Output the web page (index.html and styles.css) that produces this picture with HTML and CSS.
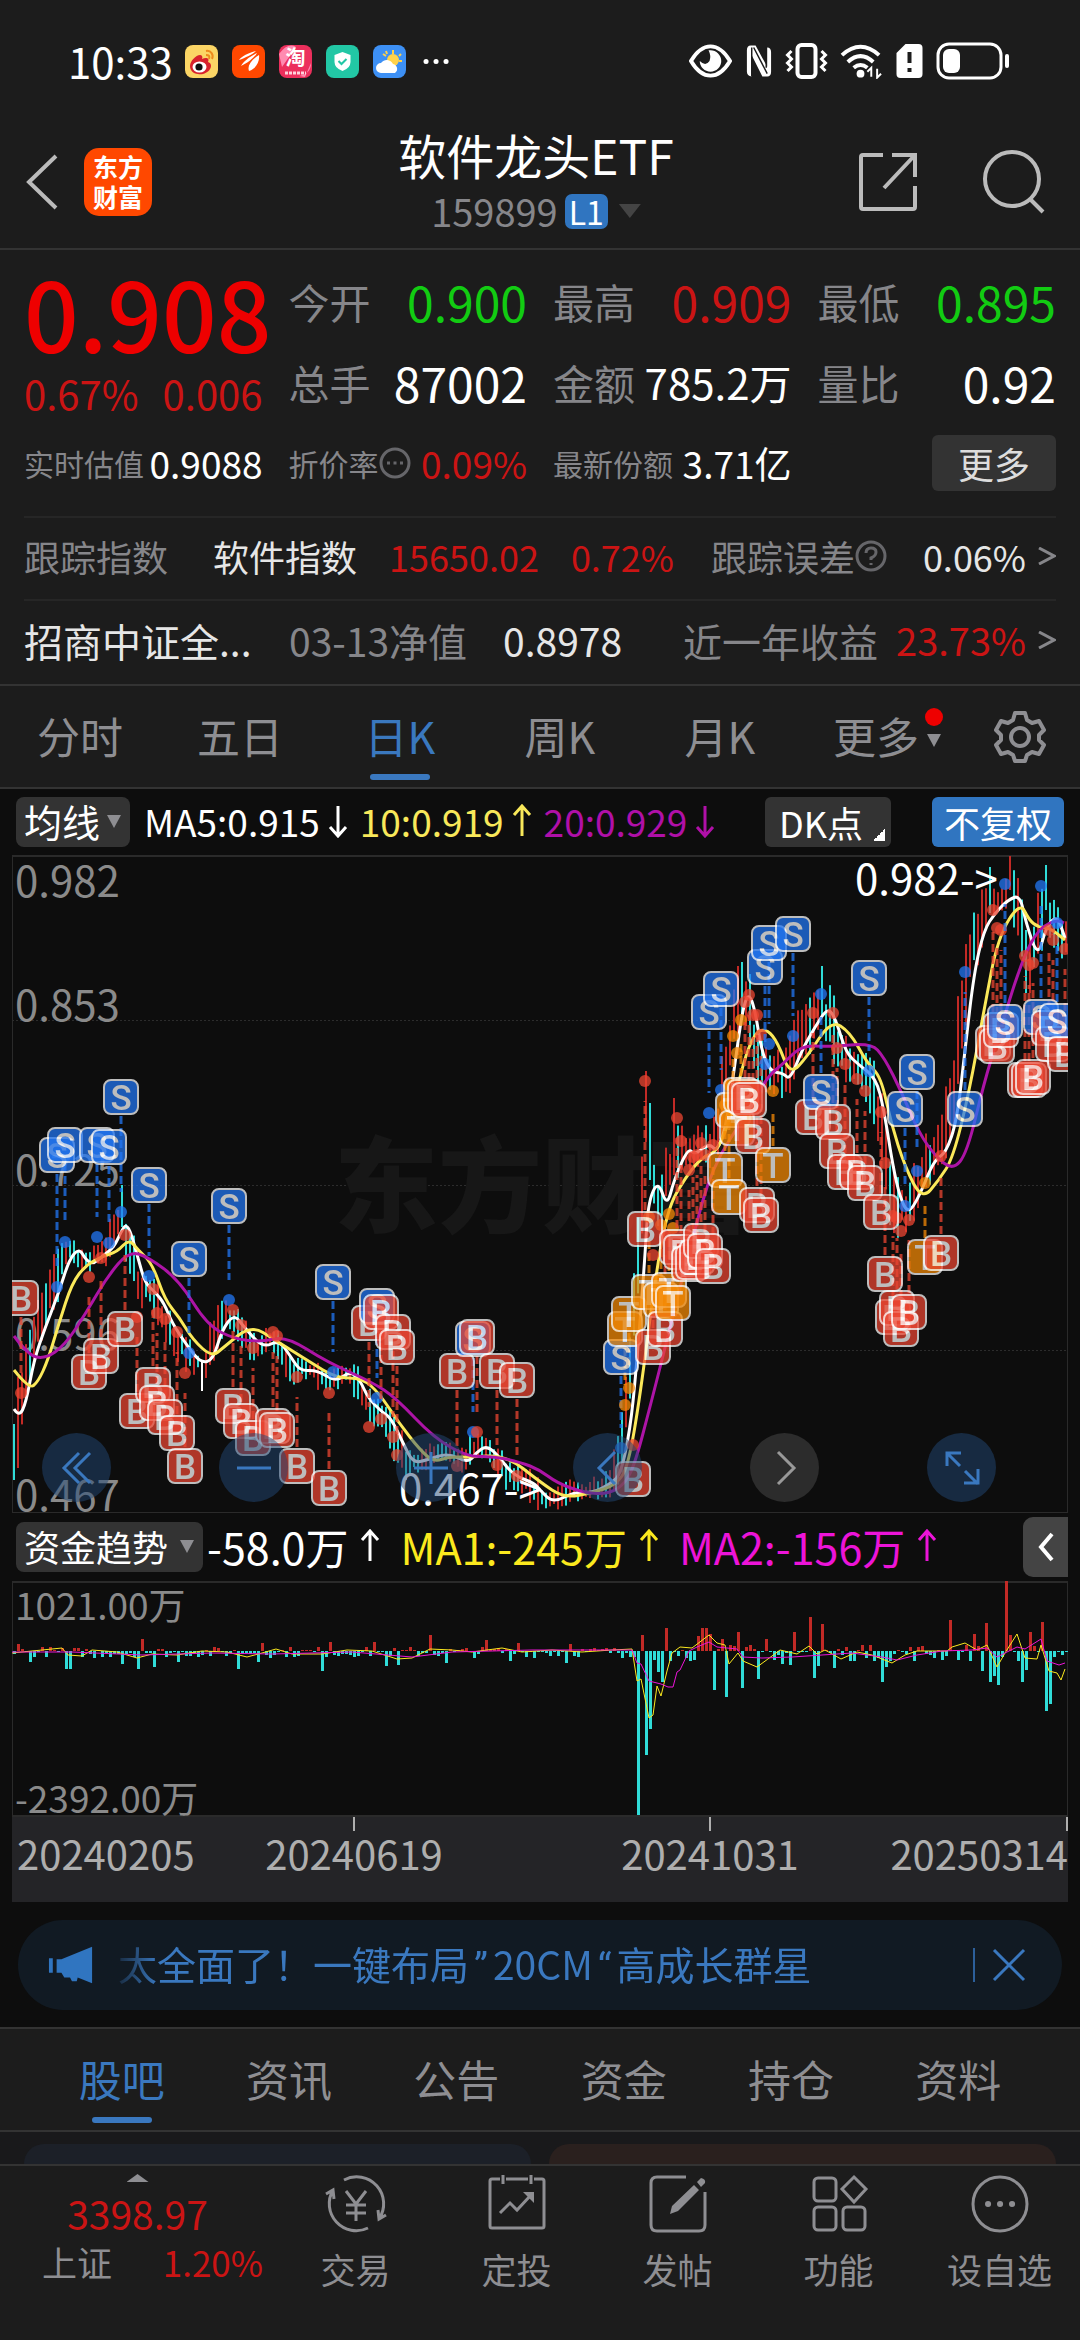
FILE: index.html
```html
<!DOCTYPE html>
<html lang="zh-CN">
<head>
    <meta charset="UTF-8">
    <meta name="viewport" content="width=device-width, initial-scale=1.0">
    <title>软件龙头ETF 159899</title>
    <link rel="stylesheet" href="styles.css">
</head>
<body>
    <div class="status-bar">
        <span class="clock">10:33</span>
        <div class="app-icons">
            <svg viewBox="0 0 33 33"><rect width="33" height="33" rx="8" fill="#fbd565"/><path d="M5 21c0-5 6-11 10-11 2 0 3 2 2 4 4-2 8-1 6 3 3 1 4 4 2 7-2 4-8 6-12 5-5 0-8-4-8-8z" fill="#d8222c"/><ellipse cx="14.500" cy="22" rx="7" ry="5.500" fill="#fff"/><circle cx="14" cy="22" r="3.600" fill="#111"/><path d="M21 6c5-1 8 4 6 8M21 10c3 0 4 1 3 4" fill="none" stroke="#ee8a1c" stroke-width="2"/></svg>
            <svg viewBox="0 0 33 33"><rect width="33" height="33" rx="8" fill="#ff4800"/><path d="M7 15c3-4 9-7 17-9-3 3-11 7-17 9zM9 21c3-5 8-9 16-13-2 4-9 10-16 13zM17 26c-2-5 2-11 10-16 1 6-3 14-10 16z" fill="#fff"/></svg>
            <svg viewBox="0 0 33 33"><rect width="33" height="33" rx="8" fill="#ec2f5c"/><path d="M0 9Q9-3 17 2L3 22zM20 31q12-2 12-13l-6 14z" fill="#ff8bb0"/><text x="16.500" y="20" class="tao">淘</text><path d="M6 28h21" stroke="#ffd2dc" stroke-width="3" stroke-dasharray="3 1"/></svg>
            <svg viewBox="0 0 33 33"><rect width="33" height="33" rx="8" fill="#22c7a5"/><path d="M16.500 7l8 3v7q0 6-8 9-8-3-8-9v-7z" fill="#fff"/><path d="M12.500 16l3 3 5-5" fill="none" stroke="#22c7a5" stroke-width="2"/></svg>
            <svg viewBox="0 0 33 33"><rect width="33" height="33" rx="8" fill="#3d90f5"/><path d="M20 5v4M10 9l3 2M28 9l-2 2M29 16h-3M13 6l1 3" stroke="#ffd24a" stroke-width="2"/><circle cx="20" cy="15" r="6" fill="#ffd24a"/><path d="M8 28a5 5 0 0 1 0-10 7 7 0 0 1 12 1 5 5 0 0 1 2 9z" fill="#fff"/></svg>
            <svg viewBox="0 0 33 33"><path d="M6 16.500h.1M16 16.500h.1M26 16.500h.1" stroke="#fff" stroke-width="5" stroke-linecap="round"/></svg>
        </div>
        <div class="system-icons">
            <svg class="eye" viewBox="0 0 44 36"><path d="M2 18Q11 3 22 3t20 15Q33 33 22 33T2 18z" fill="none" stroke="#fff" stroke-width="4"/><path d="M22 7a11 11 0 1 1-11 11q6 6 10 0 2-5-1-11z" fill="#fff"/></svg>
            <svg class="nfc" viewBox="0 0 30 36"><path d="M7 2h5l12 22V4q4 0 4 5v20q0 5-4 5h-5L8 12v22q-5-1-5-5V7q0-5 4-5z" fill="#fff"/><path d="M8 4v30M10 4l14 27M23 3v22" stroke="#1c1c1c" stroke-width="1.500"/></svg>
            <svg class="vibrate" viewBox="0 0 42 36"><rect x="12" y="2" width="18" height="32" rx="4" fill="none" stroke="#fff" stroke-width="4"/><path d="M6 8L2 12l4 4-4 4 4 4-4 4M36 8l4 4-4 4 4 4-4 4 4 4" fill="none" stroke="#fff" stroke-width="3"/></svg>
            <svg class="wifi" viewBox="0 0 44 36"><path d="M2 12q19-17 38 0M8 19q13-12 26 0M14 25q7-6 14 0" fill="none" stroke="#fff" stroke-width="4"/><circle cx="21" cy="31" r="4" fill="#fff"/><path d="M32 34v-9l-4 4M38 26v9l4-4" fill="none" stroke="#fff" stroke-width="2"/></svg>
            <svg class="sim" viewBox="0 0 28 36"><path d="M10 1h13q4 0 4 4v26q0 4-4 4H5q-4 0-4-4V10z" fill="#fff"/><path d="M14 9v11M14 25v4" stroke="#1c1c1c" stroke-width="4"/></svg>
            <svg class="battery" viewBox="0 0 74 38"><rect x="2" y="2" width="63" height="34" rx="11" fill="none" stroke="#fff" stroke-width="3"/><rect x="7" y="7" width="17" height="24" rx="6" fill="#fff"/><path d="M71 14v10" stroke="#fff" stroke-width="4" stroke-linecap="round"/></svg>
        </div>
    </div>

    <header class="header">
        <div class="header-left">
            <button class="icon-button" aria-label="返回"><svg class="back" viewBox="0 0 34 56"><path d="M31 2L4 28l27 26"/></svg></button>
            <div class="logo">东方<br>财富</div>
        </div>
        <div class="header-title">
            <h1>软件龙头ETF</h1>
            <div class="code">159899<span class="level">L1</span><i class="caret"></i></div>
        </div>
        <div class="header-right">
            <button class="icon-button" aria-label="分享"><svg class="share" viewBox="0 0 60 60"><path d="M25 3H5q-2 0-2 2v50q0 2 2 2h50q2 0 2-2V34M34 3h23v22M57 3L26 36"/></svg></button>
            <button class="icon-button" aria-label="搜索"><svg class="search" viewBox="0 0 66 66"><circle cx="30" cy="30" r="27"/><path d="M48 50l13 13"/></svg></button>
        </div>
    </header>

    <main>
        <section class="quote">
            <div class="price">
                <strong>0.908</strong>
                <div class="change"><span>0.67%</span><span>0.006</span></div>
            </div>
            <div class="cell"><span>今开</span><b class="green">0.900</b></div>
            <div class="cell"><span>最高</span><b class="red">0.909</b></div>
            <div class="cell"><span>最低</span><b class="green">0.895</b></div>
            <div class="cell"><span>总手</span><b>87002</b></div>
            <div class="cell"><span>金额</span><b class="amount">785.2万</b></div>
            <div class="cell"><span>量比</span><b>0.92</b></div>
            <div class="cell small"><span>实时估值</span><b>0.9088</b></div>
            <div class="cell small"><span>折价率<svg class="info" viewBox="0 0 32 32"><circle cx="16" cy="16" r="14"/><path d="M8 16h3M14.500 16h3M21 16h3"/></svg></span><b class="red">0.09%</b></div>
            <div class="cell small"><span>最新份额</span><b>3.71亿</b></div>
            <div class="cell last"><button class="more">更多</button></div>
        </section>

        <a class="info-row" href="#index">
            <span class="muted">跟踪指数</span>
            <span>软件指数</span>
            <span class="red pair"><span>15650.02</span><span>0.72%</span></span>
            <span class="muted">跟踪误差<svg class="info" viewBox="0 0 32 32"><circle cx="16" cy="16" r="14"/><path d="M11 13q0-5 5-5t5 4-5 6v2M16 23v2"/></svg></span>
            <span class="end">0.06%<svg class="arrow" viewBox="0 0 18 18"><path d="M1 1l15 8-15 8"/></svg></span>
        </a>
        <a class="info-row nav-row" href="#fund">
            <span>招商中证全...</span>
            <span class="muted">03-13净值</span>
            <span class="value">0.8978</span>
            <span class="muted">近一年收益</span>
            <span class="end red">23.73%<svg class="arrow" viewBox="0 0 18 18"><path d="M1 1l15 8-15 8"/></svg></span>
        </a>

        <nav class="period-tabs">
            <a href="#minute">分时</a>
            <a href="#five">五日</a>
            <a href="#day" class="active">日K</a>
            <a href="#week">周K</a>
            <a href="#month">月K</a>
            <a href="#more" class="tab-more">更多<span class="marks"><i class="dot"></i><i class="caret"></i></span></a>
            <button class="icon-button" aria-label="设置"><svg class="gear" viewBox="0 0 52 52"><path d="M21 2h10l2 7 5 3 7-2 5 9-5 5v5l5 5-5 9-7-2-5 3-2 6H21l-2-6-5-3-7 2-5-9 5-5v-5l-5-5 5-9 7 2 5-3z"/><circle cx="26" cy="26" r="9"/></svg></button>
        </nav>

        <section class="charts">
            <div class="toolbar">
                <span class="dropdown ma-drop"><select aria-label="均线"><option>均线</option></select></span>
                <span class="legend"><span>MA5:0.915<svg class="trend" viewBox="0 0 20 34"><path d="M10 2v30M2 23l8 9 8-9"/></svg></span><span class="yellow">10:0.919<svg class="trend" viewBox="0 0 20 34"><path d="M10 32V2M2 11l8-9 8 9"/></svg></span><span class="purple">20:0.929<svg class="trend" viewBox="0 0 20 34"><path d="M10 2v30M2 23l8 9 8-9"/></svg></span></span>
                <button class="dk">DK点</button>
                <button class="adjust">不复权</button>
            </div>

            <div class="kline">
                <svg id="kline" viewBox="0 0 1056 658"></svg>
                <div class="controls">
                    <button aria-label="最早"><svg viewBox="0 0 40 40"><path d="M22 5L7 20l15 15M33 5L18 20l15 15"/></svg></button>
                    <button aria-label="缩小"><svg viewBox="0 0 40 40"><path d="M3 20h34"/></svg></button>
                    <button aria-label="放大"><svg viewBox="0 0 40 40"><path d="M3 20h34M20 4v32"/></svg></button>
                    <button aria-label="向左"><svg viewBox="0 0 40 40"><path d="M27 4L11 20l16 16"/></svg></button>
                    <button aria-label="向右" class="off"><svg viewBox="0 0 40 40"><path d="M13 4l16 16-16 16"/></svg></button>
                    <button aria-label="全屏"><svg viewBox="0 0 40 40"><path d="M18 18L5 5M5 18V5h14M23 23l13 13M36 21v14H22"/></svg></button>
                </div>
            </div>

            <div class="toolbar flow-toolbar">
                <span class="dropdown flow-drop"><select aria-label="指标"><option>资金趋势</option></select></span>
                <span class="legend flow-legend"><span>-58.0万<svg class="trend" viewBox="0 0 20 34"><path d="M10 32V2M2 11l8-9 8 9"/></svg></span><span class="bright-yellow">MA1:-245万<svg class="trend" viewBox="0 0 20 34"><path d="M10 32V2M2 11l8-9 8 9"/></svg></span><span class="pink">MA2:-156万<svg class="trend" viewBox="0 0 20 34"><path d="M10 32V2M2 11l8-9 8 9"/></svg></span></span>
                <button class="expand" aria-label="展开"><svg viewBox="0 0 18 30"><path d="M15 2L4 15l11 13"/></svg></button>
            </div>
            <svg id="flow" viewBox="0 0 1056 236"></svg>
            <div class="axis"><span>20240205</span><span class="tick">20240619</span><span class="tick">20241031</span><span class="tick">20250314</span></div>

            <div class="notice">
                <svg class="horn" viewBox="0 0 48 40"><path d="M1 13h4v15H1zM9 14h5L46 1v38l-15-6-1 4h-5l-2-4h-6l-3-5H9z"/></svg>
                <p>太全面了！一键布局<q>”</q>20CM<q>“</q>高成长群星</p>
                <button class="close" aria-label="关闭"><svg viewBox="0 0 34 34"><path d="M2 2l30 30M32 2L2 32"/></svg></button>
            </div>
        </section>

        <nav class="content-tabs">
            <a href="#bar" class="active">股吧</a>
            <a href="#news">资讯</a>
            <a href="#notice">公告</a>
            <a href="#money">资金</a>
            <a href="#hold">持仓</a>
            <a href="#data">资料</a>
        </nav>
        <div class="cards"><div class="card blue"></div><div class="card brown"></div></div>
    </main>

    <footer class="bottom-bar">
        <a class="market" href="#sh">
            <i class="caret up"></i>
            <span class="points">3398.97</span>
            <span class="market-row"><span>上证</span><span class="red">1.20%</span></span>
        </a>
        <a class="action" href="#trade"><svg viewBox="0 0 64 60"><path d="M20 6a27 27 0 0 1 35 39M44 54A27 27 0 0 1 9 16M2 20l7-4 1 9M62 41l-7 4-1-9M22 17l10 13 10-13M32 30v17M22 31h20M22 39h20"/></svg>交易</a>
        <a class="action" href="#plan"><svg viewBox="0 0 64 60"><path d="M15 5H7q-2 0-2 2v45q0 2 2 2h50q2 0 2-2V7q0-2-2-2h-8M21 5h22M18 1v9M46 1v9M15 39l10-10 7 7 14-15"/><path class="solid" d="M38 18h11v11z"/></svg>定投</a>
        <a class="action" href="#post"><svg viewBox="0 0 64 60"><path d="M40 3H11q-6 0-6 6v42q0 6 6 6h42q6 0 6-6V18"/><path class="solid" d="M24 40l2-8 22-21 5 5-21 21zM51 8l4-4q5 1 4 5l-4 4z"/></svg>发帖</a>
        <a class="action" href="#tools"><svg viewBox="0 0 64 60"><rect x="7" y="4" width="22" height="23" rx="4"/><path d="M47 3l12 12-12 13-12-13z"/><rect x="7" y="33" width="22" height="23" rx="4"/><rect x="36" y="33" width="22" height="23" rx="4"/></svg>功能</a>
        <a class="action" href="#favorite"><svg viewBox="0 0 64 60"><circle cx="32" cy="30" r="27"/><path class="dots" d="M20 30h.1M32 30h.1M44 30h.1"/></svg>设自选</a>
    </footer>

    <script src="chart.js"></script>
</body>
</html>
```
FILE: styles.css
```css
* {
    box-sizing: border-box;
}
body {
    margin: 0;
    min-height: 100vh;
    display: flex;
    flex-direction: column;
    background: #1c1c1c;
    color: #fff;
    font-family: "Noto Sans CJK SC", sans-serif;
    font-size: 36px;
    line-height: 48px;
}
a {
    color: inherit;
    text-decoration: none;
}
button, select {
    margin: 0;
    padding: 0;
    border: none;
    background: none;
    color: inherit;
    font: inherit;
}
svg {
    display: block;
    fill: none;
    flex: none;
}
.red {
    color: #cb1414;
}
.green {
    color: #12cc12;
}
.muted {
    color: #86868a;
}
.caret {
    width: 22px;
    height: 14px;
    background: #444;
    clip-path: polygon(0 0, 100% 0, 50% 100%);
}
.icon-button {
    display: flex;
    align-items: center;
    justify-content: center;
}

/* status bar */
.status-bar {
    display: flex;
    align-items: center;
    height: 84px;
    padding: 38px 70px 0 68px;
}
.clock {
    font-size: 42px;
    line-height: 40px;
}
.app-icons {
    display: flex;
    gap: 14px;
    margin-left: 12px;
}
.app-icons svg {
    width: 33px;
    height: 33px;
}
.tao {
    fill: #fff;
    font-size: 20px;
    font-weight: 700;
    text-anchor: middle;
}
.system-icons {
    display: flex;
    align-items: center;
    gap: 12px;
    margin-left: auto;
}
.eye, .wifi, .vibrate {
    width: 43px;
    height: 36px;
}
.nfc, .sim {
    width: 29px;
    height: 36px;
}
.battery {
    width: 74px;
    height: 38px;
}

/* header */
.header {
    display: grid;
    grid-template-columns: 1fr 2fr 1fr;
    align-items: center;
    height: 166px;
    padding: 32px 32px 0 24px;
    border-bottom: 2px solid #333;
}
.header-left, .header-right {
    display: flex;
    align-items: center;
}
.header-left {
    gap: 24px;
}
.header-right {
    justify-content: flex-end;
    gap: 64px;
}
.header svg {
    stroke: #bbb;
    stroke-width: 4;
}
.back {
    width: 36px;
    height: 56px;
}
.share {
    width: 60px;
    height: 60px;
}
.search {
    width: 66px;
    height: 66px;
}
.logo {
    width: 68px;
    height: 68px;
    padding-top: 3px;
    border-radius: 15px;
    background: #ff4800;
    font-size: 25px;
    font-weight: 700;
    line-height: 30px;
    text-align: center;
}
.header-title {
    display: flex;
    flex-direction: column;
    align-items: center;
}
h1 {
    margin: 0;
    font-size: 48px;
    font-weight: 400;
    line-height: 58px;
}
.code {
    display: flex;
    align-items: center;
    height: 56px;
    color: #86868a;
    font-size: 38px;
}
.level {
    margin: 0 11px 0 7px;
    padding: 0 4px;
    border-radius: 7px;
    background: #3075c0;
    color: #fff;
    font-size: 32px;
    line-height: 35px;
}

/* quote numbers */
.quote {
    display: grid;
    grid-template-columns: repeat(4, minmax(0, 1fr));
    grid-auto-rows: 81px;
    column-gap: 26px;
    margin: 0 24px;
    padding: 10px 0 13px;
    border-bottom: 2px solid #262626;
}
.price {
    grid-row: span 2;
}
.price strong {
    display: block;
    color: #ee0000;
    font-size: 96px;
    font-weight: 500;
    line-height: 104px;
}
.change {
    display: flex;
    justify-content: space-between;
    color: #cb1414;
    font-size: 40px;
    line-height: 58px;
}
.cell {
    display: flex;
    align-items: center;
    justify-content: space-between;
    white-space: nowrap;
    color: #86868a;
    font-size: 41px;
}
.cell b {
    font-size: 48px;
    font-weight: 400;
}
.cell b:not([class]), .cell .amount {
    color: #fff;
}
.cell .amount {
    font-size: 42px;
}
.cell span {
    display: flex;
    align-items: center;
}
.cell.small {
    font-size: 30px;
}
.cell.small b {
    font-size: 37px;
}
.last {
    justify-content: flex-end;
}
.more {
    width: 124px;
    height: 56px;
    border-radius: 6px;
    background: #333;
    color: #ddd;
    font-size: 36px;
    line-height: 52px;
}
.info {
    width: 32px;
    height: 32px;
    stroke: #66666a;
    stroke-width: 3;
}
.info-row {
    display: grid;
    grid-template-columns: 189px 176px 1fr 185px 160px;
    align-items: center;
    height: 83px;
    margin: 0 24px;
    padding-bottom: 5px;
    border-bottom: 2px solid #262626;
    color: #e6e6e6;
    white-space: nowrap;
}
.info-row span {
    display: flex;
    align-items: center;
}
.info-row .red {
    color: #cb1414;
}
.info-row .pair {
    gap: 32px;
}
.info-row .end {
    justify-content: flex-end;
    gap: 12px;
}
.nav-row {
    grid-template-columns: 265px 214px 1fr 200px 173px;
    border: none;
    font-size: 39px;
}
.nav-row .end {
    font-size: 38px;
}
.arrow {
    width: 18px;
    height: 18px;
    stroke: #86868a;
    stroke-width: 3;
}

/* period tabs */
.period-tabs {
    display: grid;
    grid-template-columns: repeat(6, 4fr) 3fr;
    height: 105px;
    border-top: 2px solid #333;
    border-bottom: 2px solid #333;
}
.period-tabs a, .content-tabs a {
    display: flex;
    align-items: center;
    justify-content: center;
    position: relative;
    padding-bottom: 3px;
    color: #8e8e92;
    font-size: 43px;
}
.period-tabs .active, .content-tabs .active {
    color: #3a78bf;
}
.active::after {
    content: "";
    position: absolute;
    bottom: 7px;
    width: 60px;
    height: 6px;
    border-radius: 3px;
    background: #3a78bf;
}
.period-tabs .tab-more {
    padding-left: 16px;
}
.marks {
    display: flex;
    flex-direction: column;
    align-items: center;
    gap: 8px;
    height: 54px;
    margin-left: 6px;
}
.dot {
    width: 18px;
    height: 18px;
    border-radius: 50%;
    background: #ee0000;
}
.marks .caret {
    width: 14px;
    height: 13px;
    background: #8e8e92;
}
.gear {
    width: 52px;
    height: 52px;
    stroke: #8e8e92;
    stroke-width: 4;
    stroke-linejoin: round;
}

/* charts */
.charts {
    padding: 0 12px 17px;
    background: #0d0d0d;
}
.toolbar {
    display: flex;
    align-items: center;
    height: 66px;
    padding: 0 4px;
    white-space: nowrap;
}
.dropdown {
    position: relative;
    margin-right: 14px;
    border-radius: 8px;
    background: #333;
}
.dropdown select {
    display: block;
    width: 100%;
    height: 50px;
    padding: 0 0 4px 8px;
    appearance: none;
}
.ma-drop select {
    font-size: 38px;
}
.dropdown::after {
    content: "";
    position: absolute;
    right: 9px;
    top: 18px;
    width: 14px;
    height: 13px;
    background: #8e8e92;
    clip-path: polygon(0 0, 100% 0, 50% 100%);
    pointer-events: none;
}
.ma-drop {
    width: 114px;
}
.flow-drop {
    width: 187px;
    margin-right: 4px;
}
.legend {
    display: flex;
    flex: 1;
    gap: 12px;
    padding-bottom: 3px;
    font-size: 37px;
}
.legend > span {
    display: flex;
    align-items: center;
    gap: 8px;
}
.trend {
    width: 20px;
    height: 34px;
    stroke: currentColor;
    stroke-width: 3;
}
.yellow {
    color: #f8e85a;
}
.purple {
    color: #b010a8;
}
.bright-yellow {
    color: #fbe91e;
}
.pink {
    color: #ec14d8;
}
.dk, .adjust {
    height: 50px;
    border-radius: 6px;
    line-height: 46px;
}
.dk {
    width: 126px;
    margin-right: 41px;
    padding-right: 14px;
    background: linear-gradient(135deg, transparent 50%, #fff 50%) right 6px bottom 6px / 12px 12px no-repeat #333;
}
.adjust {
    width: 132px;
    background: #3075c0;
}
.flow-toolbar {
    height: 68px;
    padding-right: 0;
}
.flow-legend {
    gap: 20px;
    font-size: 43px;
}
.flow-legend > span {
    gap: 12px;
}
.expand {
    display: flex;
    align-items: center;
    justify-content: center;
    width: 45px;
    height: 60px;
    border-radius: 10px 0 0 10px;
    background: #444;
}
.expand svg {
    width: 18px;
    height: 30px;
    stroke: #fff;
    stroke-width: 4;
}
.kline {
    position: relative;
}
#kline, #flow {
    width: 100%;
    height: auto;
}
.controls {
    position: absolute;
    left: 30px;
    right: 72px;
    bottom: 11px;
    display: flex;
    justify-content: space-between;
}
.controls button {
    display: flex;
    align-items: center;
    justify-content: center;
    width: 69px;
    height: 69px;
    border-radius: 50%;
    background: rgba(34, 72, 118, 0.5);
}
.controls .off {
    background: #2c2c2c;
}
.controls svg {
    width: 40px;
    height: 40px;
    stroke: #3a78bf;
    stroke-width: 3;
}
.controls .off svg {
    stroke: #999;
}
.frame {
    stroke: #2a2a2a;
    stroke-width: 2;
}
.grid-line {
    stroke: #2c2c2c;
    stroke-dasharray: 2 2;
}
.watermark {
    fill: #171717;
    font-size: 104px;
    font-weight: 900;
}
.scale {
    fill: #8a8a8a;
    font-size: 42px;
}
.flow-scale {
    fill: #8a8a8a;
    font-size: 37px;
}
.extreme {
    fill: #fff;
    font-size: 42px;
}
.ma {
    stroke-width: 3;
    stroke-linejoin: round;
}
.flow-ma {
    stroke-width: 1;
}
.stem {
    stroke-width: 3;
    stroke-dasharray: 8 4;
    opacity: 0.75;
}
.point {
    opacity: 0.75;
}
.badge {
    opacity: 0.73;
}
.badge rect {
    stroke: #fff;
    stroke-width: 2;
}
.badge text {
    fill: #fff;
    font-family: Roboto, sans-serif;
    font-size: 35px;
    font-weight: 500;
    text-anchor: middle;
}
.axis {
    display: grid;
    grid-template-columns: minmax(0, 164fr) minmax(0, 356fr) minmax(0, 356fr) minmax(0, 180fr);
    height: 85px;
    background: #242427;
    color: #aeaeae;
    font-size: 40px;
    line-height: 44px;
}
.axis span {
    display: flex;
    flex-direction: column;
    align-items: center;
    padding-top: 14px;
}
.axis .tick {
    padding-top: 0;
}
.axis .tick::before {
    content: "";
    width: 2px;
    height: 14px;
    background: #aeaeae;
}
.axis span:first-child {
    align-items: flex-start;
    padding-left: 5px;
}
.axis span:last-child {
    align-items: flex-end;
}

/* notice strip */
.notice {
    display: flex;
    align-items: center;
    height: 90px;
    margin: 18px 6px 0;
    padding: 0 36px 0 30px;
    border-radius: 45px;
    background: #111a23;
    color: #3a78bf;
    font-size: 39px;
}
.horn {
    width: 46px;
    height: 40px;
    fill: #3075c0;
}
.notice p {
    flex: 1;
    margin: 0 0 0 14px;
    padding-left: 10px;
    white-space: nowrap;
    mask-image: linear-gradient(90deg, transparent, #000 50px);
}
.notice q {
    margin: 0 5px;
    font-family: Roboto, sans-serif;
    quotes: none;
}
.close {
    padding-left: 17px;
    border-left: 2px solid #2c5f9a;
}
.close svg {
    width: 34px;
    height: 34px;
    stroke: #3a78bf;
    stroke-width: 3;
}

/* content tabs */
.content-tabs {
    display: grid;
    grid-template-columns: repeat(6, 1fr);
    height: 105px;
    padding: 0 38px;
    border-top: 2px solid #333;
    border-bottom: 2px solid #333;
}
.cards {
    display: grid;
    grid-template-columns: 1fr 1fr;
    gap: 18px;
    height: 32px;
    padding: 12px 24px 0;
    background: #19191b;
}
.card {
    border-radius: 26px 26px 0 0;
}
.blue {
    background: #1c2028;
}
.brown {
    background: #2a201e;
}

/* bottom bar */
.bottom-bar {
    display: grid;
    grid-template-columns: 275fr repeat(5, 161fr);
    flex: 1;
    border-top: 2px solid #333;
    color: #8e8e92;
    font-size: 35px;
}
.market {
    display: flex;
    flex-direction: column;
    align-items: center;
    padding-top: 8px;
}
.up {
    height: 8px;
    background: #8e8e92;
    clip-path: polygon(0 100%, 100% 100%, 50% 0);
}
.points {
    margin-top: 6px;
    color: #cb1414;
    font-size: 39px;
    line-height: 50px;
}
.market-row {
    display: flex;
    justify-content: space-between;
    width: 100%;
    padding: 0 12px 0 42px;
}
.action {
    display: flex;
    flex-direction: column;
    align-items: center;
    gap: 11px;
    padding-top: 8px;
}
.action svg {
    width: 64px;
    height: 60px;
    stroke: #8e8e92;
    stroke-width: 3;
}
.action .solid {
    fill: #8e8e92;
    stroke: none;
}
.action .dots {
    stroke-width: 6;
    stroke-linecap: round;
}
```
FILE: chart.js
```js
const NS = 'http://www.w3.org/2000/svg';
const RED = '#c22a26';
const CYAN = '#30dcd8';

const ma5 = [[2,554],[7,562],[14,548],[22,505],[33,473],[47,437],[57,405],[67,393],[74,405],[81,409],[91,401],[102,392],[109,377],[114,369],[119,378],[126,403],[133,428],[143,437],[152,448],[160,468],[176,492],[189,508],[201,505],[210,475],[222,459],[232,472],[251,493],[267,485],[279,502],[288,516],[305,515],[324,527],[338,516],[348,525],[356,543],[370,557],[379,563],[391,588],[401,608],[415,605],[436,598],[456,608],[465,597],[474,591],[484,598],[501,620],[522,628],[528,635],[541,648],[562,637],[580,638],[600,628],[609,618],[618,575],[624,518],[633,402],[636,348],[646,325],[655,352],[662,325],[676,293],[683,300],[697,288],[705,297],[714,272],[723,208],[731,152],[737,138],[743,155],[750,198],[759,217],[771,218],[778,225],[790,195],[803,172],[816,152],[824,165],[834,198],[847,210],[864,223],[872,255],[881,312],[888,342],[896,359],[907,342],[922,305],[934,298],[945,265],[953,195],[962,118],[972,75],[983,58],[996,45],[1008,40],[1014,68],[1026,103],[1034,72],[1045,60],[1053,83]];
const ma10 = [[2,515],[17,534],[26,527],[36,505],[47,468],[60,428],[74,410],[91,401],[105,397],[117,384],[126,395],[140,408],[153,445],[167,462],[181,485],[200,502],[212,492],[239,470],[263,485],[298,507],[324,523],[350,523],[367,538],[387,568],[408,595],[422,607],[436,602],[455,602],[494,600],[528,627],[552,643],[580,638],[604,630],[616,612],[628,542],[642,432],[655,355],[673,323],[690,302],[705,297],[719,262],[731,208],[743,177],[755,174],[766,188],[778,220],[795,202],[819,165],[838,177],[855,208],[869,222],[879,268],[893,312],[910,345],[927,325],[941,303],[957,238],[972,155],[986,82],[1008,47],[1017,65],[1026,72],[1038,73],[1053,85]];
const ma20 = [[2,481],[16,500],[33,504],[53,490],[74,458],[95,422],[117,396],[136,402],[167,425],[195,470],[222,484],[250,487],[274,481],[315,507],[360,527],[384,543],[422,583],[456,602],[480,601],[508,607],[528,615],[545,628],[573,638],[597,639],[614,628],[624,605],[638,552],[655,485],[680,385],[700,312],[735,258],[755,222],[772,208],[790,190],[817,192],[859,188],[872,202],[890,238],[907,278],[924,302],[941,315],[955,298],[972,228],[986,182],[1010,105],[1027,73],[1045,65],[1052,68]];

// candles that stand out from the rest: x, high, low, colour
const spikes = [[2,569,625,CYAN],[6,522,613,RED],[110,330,372,CYAN],[190,507,536,'#fff'],[634,216,287,RED],[638,248,325,CYAN],[662,243,320,RED],[726,111,200,RED],[730,107,165,CYAN],[810,111,162,CYAN],[978,12,58,CYAN],[998,1,35,RED],[1014,75,138,CYAN],[1018,80,138,RED],[1034,10,55,CYAN]];

// type, x, badge y, price point y
const signals = [
    ['S',45,300,432],['S',53,290,387],['S',85,290,382],['S',97,292,388],['S',109,242,357],['S',137,330,421],['S',177,404,498],['S',217,351,445],['S',321,427,517],
    ['B',9,443,538],['B',77,517,422],['B',89,501,403],['B',113,474,380],['B',125,556,462],['B',141,530,434],['B',145,548,458],['B',153,562,464],['B',165,578,477],['B',173,611,518],
    ['B',221,551,455],['B',229,566,470],['B',241,583,493],['B',261,571,477],['B',265,575,481],['B',285,611,522],['B',317,633,538],
    ['B',357,468,572],['S',365,451,543],['B',369,457,564],['B',381,477,582],['B',385,492,600],['B',445,516,611],['S',461,484,577],['B',465,482,577],['B',485,516,610],['B',505,525,621],
    ['S',609,502,593],['T',613,474,550],['T',617,459,533],['B',621,624,590],['B',633,374,226],['T',637,437,362],['B',641,492,400],['T',649,445,370],['B',653,474,380],['T',657,435,359],['T',661,448,373],
    ['B',665,392,263],['B',669,397,286],['B',677,409,315],['B',681,407,302],['B',685,402,300],['B',689,386,288],['B',693,396,300],['B',701,411,290],
    ['S',697,157,258],['S',709,134,235],['T',713,315,250],['T',717,342,230],['T',721,255,181],['T',725,273,198],['T',729,240,165],['B',733,242,147],['B',737,245,140],['B',741,281,160],['B',745,350,160],['B',749,360,180],
    ['S',753,112,209],['S',757,88,189],['T',761,310,236],['S',781,79,181],['B',801,262,158],['S',809,237,139],['B',821,267,158],['B',825,296,193],['B',833,317,209],['B',845,317,224],['B',853,328,236],
    ['S',857,123,216],['B',869,357,257],['B',873,419,308],['B',881,462,361],['B',885,453,363],['B',889,474,376],['S',893,254,351],['B',897,457,365],['S',905,217,316],['T',913,402,328],['B',929,398,301],['S',953,254,117],
    ['B',981,188,55],['B',985,191,73],['B',989,175,75],['S',993,167,29],['B',1013,225,101],['B',1017,225,110],['B',1021,222,108],['S',1029,162,31],['B',1037,173,75],['B',1041,189,85],['S',1045,166,68],['B',1053,199,94]
];
const signalColors = { S: '#2277f5', B: '#ec4632', T: '#f58a05' };

// bars of the fund flow, by slot number; the rest are small
const flowBars = {1:7,4:-11,13:-18,14:-18,20:-7,27:-13,31:-18,32:12,35:-16,41:-11,56:-18,61:-11,62:8,77:-20,79:9,90:9,93:-15,96:-14,104:16,108:-12,118:11,124:-10,126:8,138:-12,139:7,152:-7,156:-164,157:16,158:-104,159:-78,161:-21,162:-31,163:23,166:-5,171:15,172:23,173:23,174:17,175:-39,177:12,178:-46,181:19,182:-37,186:-28,188:12,192:-13,194:-14,195:19,199:34,200:-27,201:-15,202:27,205:-17,214:6,217:-31,218:-16,234:31,240:17,242:-20,243:28,244:-31,245:-25,246:-34,248:70,249:16,252:-31,253:-19,254:19,257:29,258:-60,259:-53};
const flowMa1 = [[0,72],[20,70],[50,67],[56,74],[70,75],[80,69],[105,71],[125,77],[140,73],[165,74],[190,70],[215,71],[235,76],[250,72],[264,68],[280,73],[310,73],[335,69],[360,70],[385,78],[400,77],[418,68],[440,69],[460,71],[490,67],[510,71],[540,69],[570,71],[600,69],[620,68],[625,100],[629,98],[637,137],[641,134],[645,105],[649,115],[655,90],[660,72],[668,66],[680,67],[697,54],[705,62],[713,64],[717,83],[726,72],[731,80],[745,86],[760,75],[768,69],[785,73],[797,65],[805,73],[813,69],[829,78],[845,71],[860,74],[880,82],[893,74],[905,70],[935,70],[940,66],[953,62],[965,69],[975,64],[985,86],[993,72],[1005,53],[1013,77],[1025,78],[1029,64],[1037,90],[1045,92],[1049,99],[1053,88]];
const flowMa2 = [[0,71],[60,71],[130,74],[200,72],[260,73],[340,71],[400,76],[440,71],[520,69],[620,69],[625,82],[629,83],[637,100],[649,103],[656,106],[661,106],[665,91],[668,89],[677,70],[685,66],[697,61],[705,66],[725,68],[731,76],[750,77],[780,76],[810,74],[840,72],[870,76],[885,79],[905,74],[930,70],[960,69],[975,67],[985,76],[1005,66],[1013,68],[1029,58],[1035,80],[1047,84],[1053,82]];

let seed = 7;
function random() {
    seed = (seed * 16807) % 2147483647;
    return seed / 2147483647;
}

function add(parent, name, attrs, text) {
    const el = document.createElementNS(NS, name);
    for (const key in attrs) el.setAttribute(key, attrs[key]);
    if (text) el.textContent = text;
    parent.appendChild(el);
    return el;
}

function valueAt(points, x) {
    for (let i = 1; i < points.length; i++) {
        if (x <= points[i][0]) {
            const [x0, y0] = points[i - 1];
            const [x1, y1] = points[i];
            return y0 + (y1 - y0) * Math.max(0, x - x0) / (x1 - x0);
        }
    }
    return points[points.length - 1][1];
}

function smooth(points) {
    let d = `M${points[0]}`;
    for (let i = 1; i < points.length - 1; i++) {
        const [x, y] = points[i];
        const [nx, ny] = points[i + 1];
        d += `Q${x} ${y} ${(x + nx) / 2} ${(y + ny) / 2}`;
    }
    return d + `L${points[points.length - 1]}`;
}

function drawKline() {
    const svg = document.getElementById('kline');
    add(svg, 'rect', { class: 'frame', x: 0, y: 1, width: 1056, height: 657 });
    [165, 330, 495].forEach(y => add(svg, 'line', { class: 'grid-line', x1: 0, x2: 1056, y1: y + 0.5, y2: y + 0.5 }));
    add(svg, 'text', { class: 'watermark', x: 322, y: 370 }, '东方财富');
    [['0.982', 42], ['0.853', 166], ['0.725', 331], ['0.596', 495], ['0.467', 656]].forEach(([label, y]) => {
        add(svg, 'text', { class: 'scale', x: 3, y: y }, label);
    });

    for (let x = 2; x < 1056; x += 4) {
        const spike = spikes.find(s => s[0] === x);
        let top, bottom, color;
        if (spike) {
            [, top, bottom, color] = spike;
        } else {
            const mid = valueAt(ma5, x + 7);
            const slope = valueAt(ma5, x + 12) - valueAt(ma5, x);
            const reach = (x > 630 ? 14 : 8) + Math.min(22, Math.abs(slope) * 0.4);
            top = Math.max(4, mid - reach * (0.5 + random()));
            bottom = Math.min(655, mid + reach * (0.4 + random()));
            color = random() < (slope < 0 ? 0.75 : 0.3) ? RED : CYAN;
        }
        add(svg, 'rect', { x: x - 1, y: top, width: 2, height: bottom - top, fill: color });
    }

    add(svg, 'path', { class: 'ma', d: smooth(ma5), stroke: '#fff' });
    add(svg, 'path', { class: 'ma', d: smooth(ma10), stroke: '#fbe95a' });
    add(svg, 'path', { class: 'ma', d: smooth(ma20), stroke: '#ad14a6' });

    signals.forEach(([type, x, y, py]) => {
        const color = signalColors[type];
        const dir = py > y ? 1 : -1;
        if (Math.abs(py - y) > 40) {
            add(svg, 'line', { class: 'stem', x1: x, x2: x, y1: y + dir * 19, y2: py - dir * 20, stroke: color });
        }
        add(svg, 'circle', { class: 'point', cx: x, cy: py, r: 6, fill: color });
    });
    signals.forEach(([type, x, y]) => {
        const badge = add(svg, 'g', { class: 'badge' });
        add(badge, 'rect', { x: x - 17, y: y - 17, width: 34, height: 34, rx: 7, fill: signalColors[type] });
        add(badge, 'text', { x: x, y: y + 13 }, type);
    });

    add(svg, 'text', { class: 'extreme', x: 843, y: 40 }, '0.982->');
    add(svg, 'text', { class: 'extreme', x: 387, y: 650 }, '0.467->');
}

function drawFlow() {
    const svg = document.getElementById('flow');
    add(svg, 'rect', { class: 'frame', x: 0, y: 1, width: 1056, height: 234 });
    for (let i = 0; i < 264; i++) {
        const h = flowBars[i] || Math.round((random() - 0.6) * (i > 158 ? 17 : 11)) || -1;
        add(svg, 'rect', { x: i * 4 + 1, y: h > 0 ? 70 - h : 70, width: 3, height: Math.abs(h), fill: h > 0 ? RED : CYAN });
    }
    add(svg, 'polyline', { class: 'flow-ma', points: flowMa1.join(' '), stroke: '#fbe91e' });
    add(svg, 'polyline', { class: 'flow-ma', points: flowMa2.join(' '), stroke: '#ec14d8' });
    add(svg, 'text', { class: 'flow-scale', x: 3, y: 39 }, '1021.00万');
    add(svg, 'text', { class: 'flow-scale', x: 3, y: 232 }, '-2392.00万');
}

drawKline();
drawFlow();
```
